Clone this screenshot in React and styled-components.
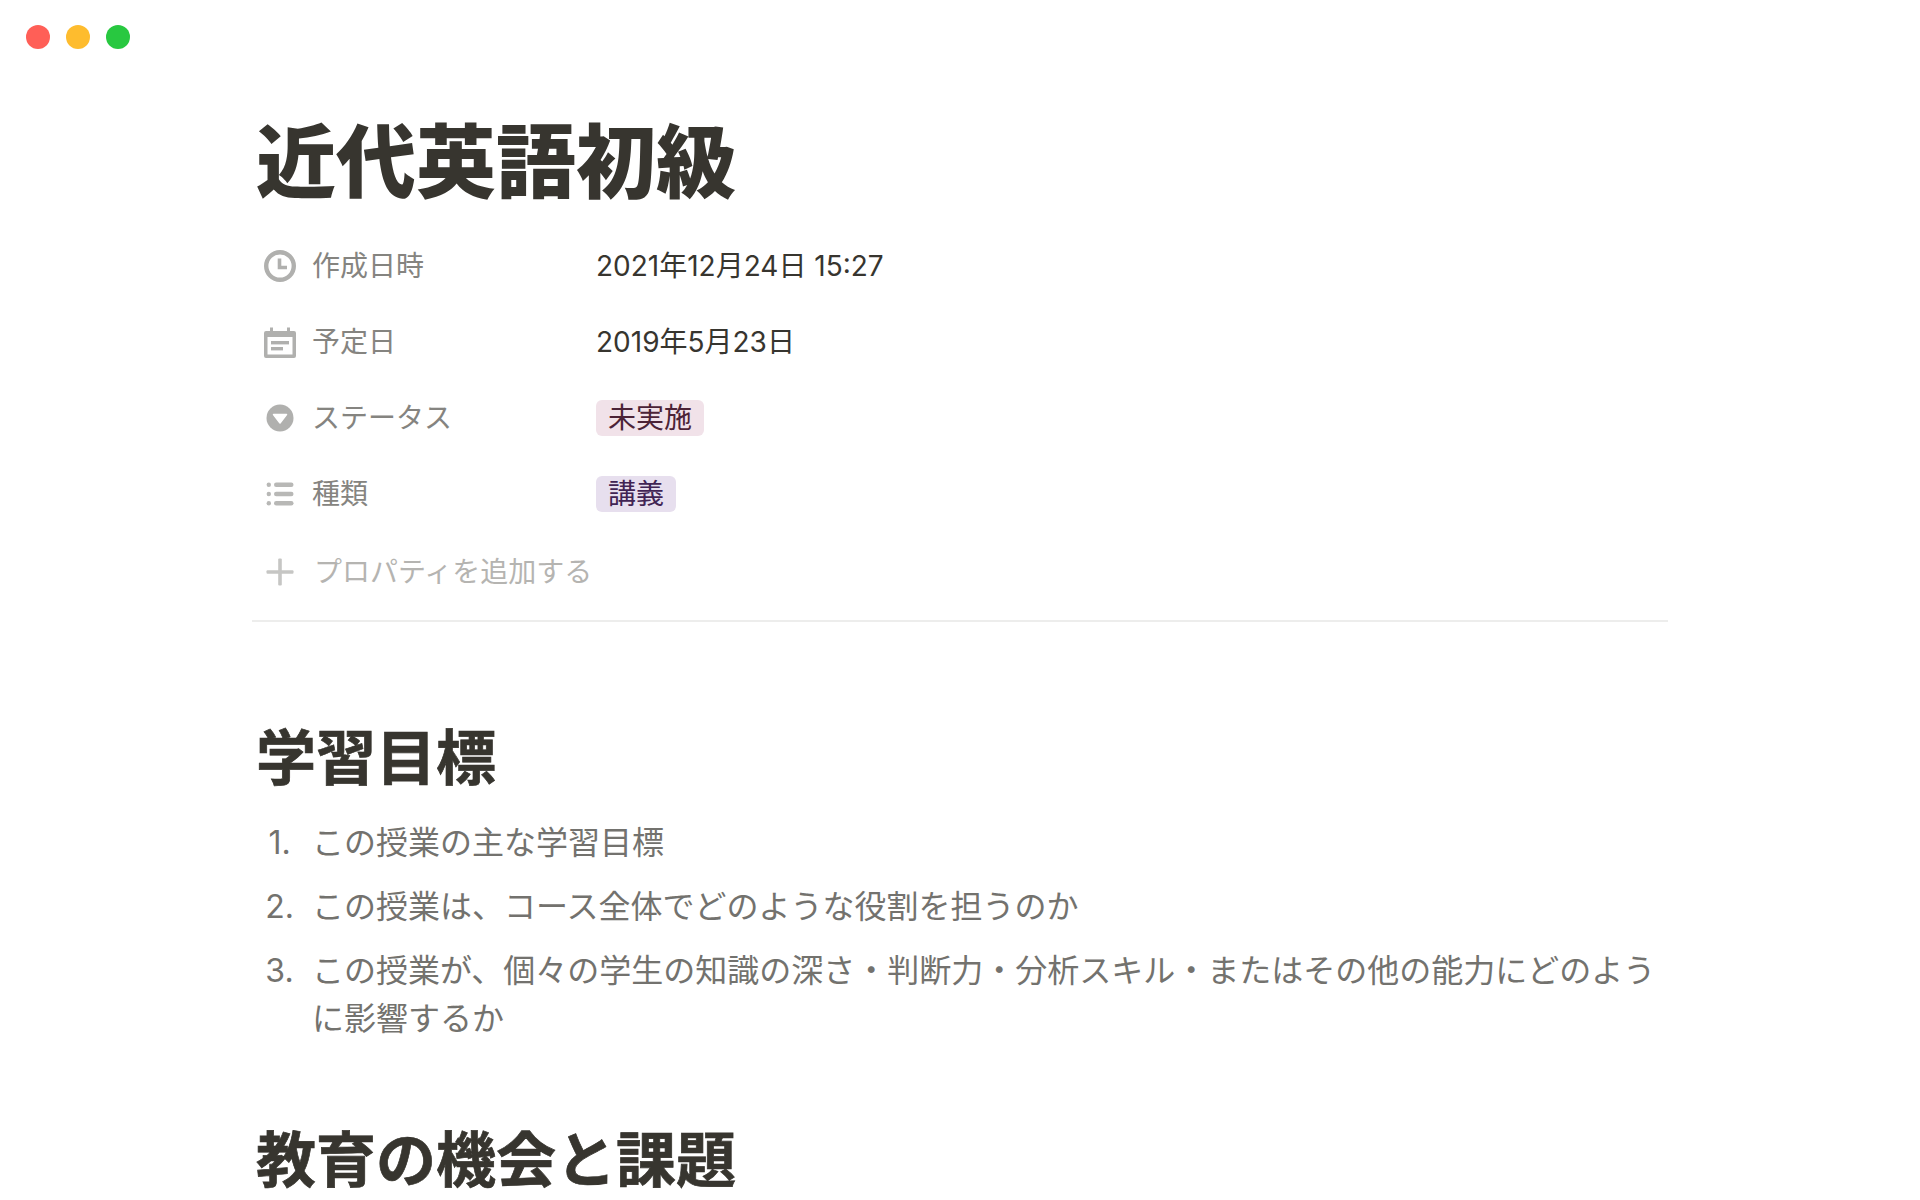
import React from "react";
import styled, { createGlobalStyle } from "styled-components";

const Global = createGlobalStyle`
  html, body { margin: 0; padding: 0; background: #fff; }
  body { height: 1200px; overflow: hidden; font-family: Inter, "Noto Sans CJK JP", sans-serif; color: #37352f; }
`;
const Page = styled.div`height: 1200px; overflow: hidden; background: #fff;`;
const TitleBar = styled.div`display: flex; gap: 16px; padding: 25px 26px 0; height: 24px;`;
const Dot = styled.span`width: 24px; height: 24px; border-radius: 50%; background: ${p => p.$c};`;
const Main = styled.main`width: 1416px; margin: 0 0 0 252px; padding-top: 65px;`;
const Title = styled.h1`margin: 0; padding-left: 4px; font-size: 80px; line-height: 96px; font-weight: 900; color: #37352f;`;
const Props = styled.div`margin-top: 18px; display: flex; flex-direction: column; padding-bottom: 10px; border-bottom: 2px solid #ededec;`;
const Row = styled.div`display: flex; align-items: center; height: 76px;`;
const Label = styled.div`width: 344px; flex: none; display: flex; align-items: center; gap: 16px; padding-left: 12px; box-sizing: border-box; font-size: 28px; line-height: 36px; color: #858480;`;
const IconBox = styled.span`width: 32px; height: 32px; flex: none; display: flex; svg { display: block; }`;
const Value = styled.div`font-size: 28px; color: #37352f; line-height: 36px;`;
const Tag = styled.span`display: inline-block; height: 36px; line-height: 36px; padding: 0 12px; border-radius: 6px; font-size: 28px; background: ${p => p.$bg}; color: ${p => p.$fg};`;
const AddRow = styled.div`display: flex; align-items: center; gap: 18px; height: 76px; margin-top: 2px; padding-left: 12px; font-size: 28px; line-height: 36px; color: #b5b4b1;`;
const H2 = styled.h2`margin: 0; padding-left: 4px; font-size: 60px; line-height: 72px; font-weight: 700; -webkit-text-stroke: 0.7px #37352f; color: #37352f;`;
const List = styled.ol`margin: 25px 0 0; padding: 0; list-style: none; display: flex; flex-direction: column; gap: 16px;`;
const Item = styled.li`display: flex; font-size: 32px; line-height: 48px; color: #73726e;`;
const Num = styled.span`width: 62px; flex: none; text-align: center; padding-right: 7px; box-sizing: border-box; font-family: Inter, sans-serif;`;
const Text = styled.span`flex: 1; min-width: 0; margin-left: -2px;`;
const Section = styled.section`margin-top: ${p => p.$mt}px;`;

const Clock = () => (
  <svg width="32" height="32" viewBox="0 0 32 32" fill="none" stroke="#b0b0ae">
    <circle cx="16" cy="16" r="13.8" strokeWidth="4.4" />
    <path d="M15.5 8.5V17.5H23" strokeWidth="3.6" />
  </svg>
);
const Calendar = () => (
  <svg width="32" height="32" viewBox="0 0 32 32" fill="none">
    <path fillRule="evenodd" fill="#b0b0ae" d="M2 5h4V1.5h3V5h14V1.5h3V5h4a2 2 0 0 1 2 2v23a2 2 0 0 1-2 2H2a2 2 0 0 1-2-2V7a2 2 0 0 1 2-2zM3.5 11v17.5h25V11z" />
    <rect x="7" y="15" width="18" height="3.4" fill="#b0b0ae" />
    <rect x="7" y="21" width="12" height="3.4" fill="#b0b0ae" />
  </svg>
);
const Select = () => (
  <svg width="32" height="32" viewBox="0 0 32 32">
    <circle cx="16" cy="16" r="13.5" fill="#b0b0ae" />
    <path d="M9.5 12.5H22.5L16 21Z" fill="#fff" strokeLinejoin="round" stroke="#fff" strokeWidth="1.5" />
  </svg>
);
const ListIcon = () => (
  <svg width="32" height="32" viewBox="0 0 32 32" fill="#b8b8b6">
    <circle cx="4.8" cy="6.7" r="2.2" /><circle cx="4.8" cy="16" r="2.2" /><circle cx="4.8" cy="25.3" r="2.2" />
    <rect x="10" y="4.5" width="19.5" height="4.4" rx="2.2" /><rect x="10" y="13.8" width="19.5" height="4.4" rx="2.2" /><rect x="10" y="23.1" width="19.5" height="4.4" rx="2.2" />
  </svg>
);
const Plus = () => (
  <svg width="32" height="32" viewBox="0 0 32 32" fill="#c6c6c4">
    <rect x="14.2" y="2.5" width="3.6" height="27" rx="1" /><rect x="2.5" y="14.2" width="27" height="3.6" rx="1" />
  </svg>
);

export default function App() {
  return (
    <Page>
      <Global />
      <TitleBar>
        <Dot $c="#ff5f57" /><Dot $c="#febc2e" /><Dot $c="#28c840" />
      </TitleBar>
      <Main>
        <Title>近代英語初級</Title>
        <Props>
          <Row><Label><IconBox><Clock /></IconBox>作成日時</Label><Value>2021年12月24日 15:27</Value></Row>
          <Row><Label><IconBox><Calendar /></IconBox>予定日</Label><Value>2019年5月23日</Value></Row>
          <Row><Label><IconBox><Select /></IconBox>ステータス</Label><Value><Tag $bg="#f1e2e9" $fg="#4c2337">未実施</Tag></Value></Row>
          <Row><Label><IconBox><ListIcon /></IconBox>種類</Label><Value><Tag $bg="#e7dfee" $fg="#412454">講義</Tag></Value></Row>
          <AddRow><IconBox><Plus /></IconBox>プロパティを追加する</AddRow>
        </Props>
        <Section $mt="100">
          <H2>学習目標</H2>
          <List>
            <Item><Num>1.</Num><Text>この授業の主な学習目標</Text></Item>
            <Item><Num>2.</Num><Text>この授業は、コース全体でどのような役割を担うのか</Text></Item>
            <Item><Num>3.</Num><Text>この授業が、個々の学生の知識の深さ・判断力・分析スキル・またはその他の能力にどのように影響するか</Text></Item>
          </List>
        </Section>
        <Section $mt="81">
          <H2>教育の機会と課題</H2>
        </Section>
      </Main>
    </Page>
  );
}
